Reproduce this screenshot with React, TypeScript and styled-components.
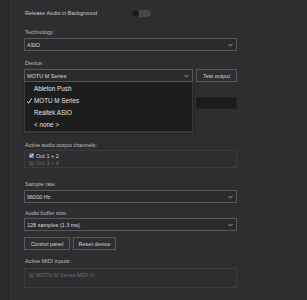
import React from "react";
import styled, { createGlobalStyle } from "styled-components";

const GlobalStyle = createGlobalStyle`
  html, body {
    margin: 0;
    padding: 0;
    background-color: #2e2e31;
  }
  body {
    font-family: "Liberation Sans", Arial, sans-serif;
  }
`;

const Page = styled.div`
  display: flex;
  width: 307px;
  height: 300px;
  overflow: hidden;
  background-color: #2e2e31;
`;

const SideStrip = styled.div`
  width: 8px;
  flex-shrink: 0;
  background-color: #2b2b2e;
  border-right: 1px solid #262629;
`;

const Main = styled.div`
  position: relative;
  padding-left: 15px;
  width: 213px;
  display: flex;
  flex-direction: column;
`;

const ToggleRow = styled.div`
  display: flex;
  align-items: center;
  justify-content: space-between;
  height: 14px;
  margin-top: 6px;
  padding-left: 1px;
  width: 126px;
  font-size: 5.5px;
  color: #c9c9c9;
`;

const Toggle = styled.div`
  width: 19px;
  height: 7px;
  border-radius: 4px;
  background-color: #47474a;
  display: flex;
  align-items: center;
`;

const Knob = styled.div`
  width: 7px;
  height: 7px;
  border-radius: 50%;
  background-color: #1c1c1e;
`;

const Label = styled.div<{ $top: number }>`
  margin-top: ${(p) => p.$top}px;
  height: 8px;
  line-height: 8px;
  padding-left: 1px;
  font-size: 5.5px;
  color: #bdbdbd;
`;

const Row = styled.div<{ $top: number }>`
  display: flex;
  gap: 3px;
  margin-top: ${(p) => p.$top}px;
`;

const Select = styled.div<{ $top?: number; $width?: number }>`
  box-sizing: border-box;
  margin-top: ${(p) => p.$top ?? 0}px;
  width: ${(p) => p.$width ?? 213}px;
  height: 13px;
  border: 1px solid #58585c;
  background-color: #2b2b2e;
  display: flex;
  align-items: center;
  justify-content: space-between;
  padding: 0 3px 0 2px;
  font-size: 5.5px;
  color: #dcdcdc;
`;

const Button = styled.div<{ $width: number }>`
  box-sizing: border-box;
  width: ${(p) => p.$width}px;
  height: 13px;
  border: 1px solid #58585c;
  background-color: #2e2e31;
  display: flex;
  align-items: center;
  justify-content: center;
  font-size: 5.5px;
  color: #d6d6d6;
`;

const Meter = styled.div`
  box-sizing: border-box;
  width: 41px;
  height: 12px;
  background-color: #1b1b1c;
  border: 1px solid #232325;
`;

const Dropdown = styled.div`
  position: absolute;
  left: 15px;
  top: 82px;
  width: 169px;
  height: 50px;
  box-sizing: border-box;
  background-color: #1d1d1e;
  border: 1px solid #3a3a3d;
  border-top: none;
  box-shadow: 0 1px 2px rgba(0, 0, 0, 0.5);
  padding-top: 1px;
  display: flex;
  flex-direction: column;
  z-index: 2;
`;

const MenuItem = styled.div`
  position: relative;
  height: 12px;
  line-height: 12px;
  padding-left: 9px;
  font-size: 6.3px;
  color: #e2e2e2;
`;

const Tick = styled.span`
  position: absolute;
  left: 2px;
  top: 3px;
  display: flex;
`;

const ListBox = styled.div<{ $top: number; $height: number }>`
  box-sizing: border-box;
  margin-top: ${(p) => p.$top}px;
  width: 213px;
  height: ${(p) => p.$height}px;
  border: 1px solid #3c3c3f;
  padding: 1px 0 0 4px;
  display: flex;
  flex-direction: column;
`;

const CheckItem = styled.div<{ $disabled?: boolean }>`
  display: flex;
  align-items: center;
  gap: 2px;
  height: 8px;
  font-size: 5.5px;
  color: ${(p) => (p.$disabled ? "#6e6e72" : "#d6d6d6")};
`;

const Box = styled.div<{ $checked?: boolean }>`
  box-sizing: border-box;
  width: 5px;
  height: 5px;
  border-radius: 1px;
  background-color: ${(p) => (p.$checked ? "#3f7fd6" : "#454548")};
  display: flex;
  align-items: center;
  justify-content: center;
`;

const Chevron = () => (
  <svg width="5" height="4" viewBox="0 0 5 4">
    <polyline points="0.5,1 2.5,3 4.5,1" fill="none" stroke="#a0a0a4" strokeWidth="1" />
  </svg>
);

const SmallCheck = () => (
  <svg width="5" height="5" viewBox="0 0 5 5">
    <polyline points="1,2.6 2,3.8 4,1" fill="none" stroke="#ffffff" strokeWidth="0.9" />
  </svg>
);

const devices = ["Ableton Push", "MOTU M Series", "Realtek ASIO", "< none >"];

export default function App() {
  return (
    <>
      <GlobalStyle />
      <Page>
        <SideStrip />
        <Main>
          <ToggleRow>
            <span>Release Audio in Background</span>
            <Toggle>
              <Knob />
            </Toggle>
          </ToggleRow>

          <Label $top={8}>Technology:</Label>
          <Select $top={2}>
            <span>ASIO</span>
            <Chevron />
          </Select>

          <Label $top={8}>Device:</Label>
          <Row $top={2}>
            <Select $width={169}>
              <span>MOTU M Series</span>
              <Chevron />
            </Select>
            <Button $width={41}>Test output</Button>
          </Row>

          <Row $top={15}>
            <Select $width={169} />
            <Meter />
          </Row>
          <Select $top={10} $width={169} />

          <Label $top={8}>Active audio output channels:</Label>
          <ListBox $top={1} $height={18}>
            <CheckItem>
              <Box $checked>
                <SmallCheck />
              </Box>
              <span>Out 1 + 2</span>
            </CheckItem>
            <CheckItem $disabled>
              <Box />
              <span>Out 3 + 4</span>
            </CheckItem>
          </ListBox>

          <Label $top={12}>Sample rate:</Label>
          <Select $top={2}>
            <span>96000 Hz</span>
            <Chevron />
          </Select>

          <Label $top={6}>Audio buffer size:</Label>
          <Select $top={1}>
            <span>128 samples (1.3 ms)</span>
            <Chevron />
          </Select>

          <Row $top={6}>
            <Button $width={46}>Control panel</Button>
            <Button $width={43}>Reset device</Button>
          </Row>

          <Label $top={7}>Active MIDI inputs:</Label>
          <ListBox $top={3} $height={20}>
            <CheckItem $disabled style={{ marginTop: 1 }}>
              <Box />
              <span>MOTU M Series MIDI In</span>
            </CheckItem>
          </ListBox>

          <Dropdown>
            {devices.map((d, i) => (
              <MenuItem key={d}>
                {i === 1 && (
                  <Tick>
                    <svg width="5" height="6" viewBox="0 0 5 6">
                      <path d="M0.3 3.3 L1.6 5.2 L4.7 0.4" fill="none" stroke="#f0f0f0" strokeWidth="0.9" />
                    </svg>
                  </Tick>
                )}
                {d}
              </MenuItem>
            ))}
          </Dropdown>
        </Main>
      </Page>
    </>
  );
}
